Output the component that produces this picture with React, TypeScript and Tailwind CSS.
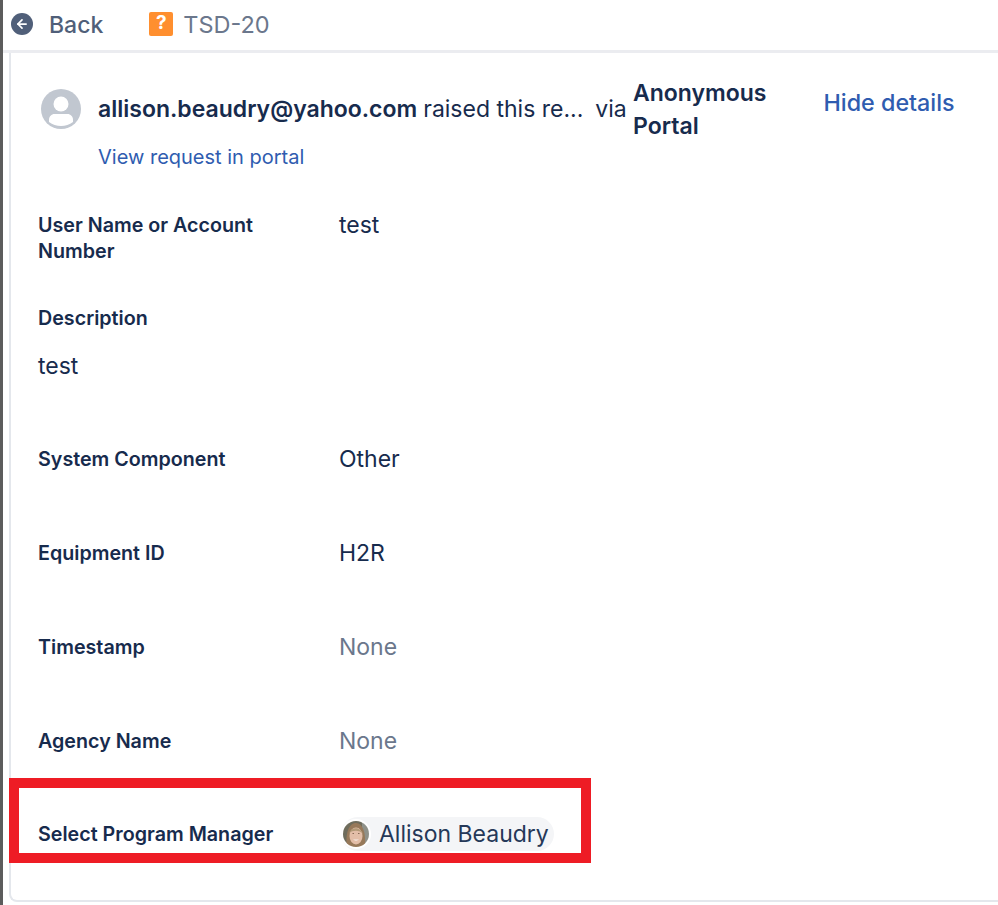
import { ArrowLeft } from "lucide-react";

const fields = [
  { label: "System Component", value: "Other", top: "mt-[64px]" },
  { label: "Equipment ID", value: "H2R", top: "mt-[64px]" },
  { label: "Timestamp", value: "None", muted: true, top: "mt-[64px]" },
  { label: "Agency Name", value: "None", muted: true, top: "mt-[64px]" },
];

const Avatar = () => (
  <svg viewBox="0 0 40 40" className="h-10 w-10 shrink-0">
    <circle cx="20" cy="20" r="20" fill="#c1c7d0" />
    <circle cx="20" cy="15" r="7.5" fill="#fff" />
    <path d="M8 30.5C8 27.5 10.5 25 13.5 25H26.5C29.5 25 32 27.5 32 30.5V33A20 20 0 0 1 8 33Z" fill="#fff" />
  </svg>
);

const Face = () => (
  <span className="block h-[26px] w-[26px] overflow-hidden rounded-full">
    <svg viewBox="0 0 26 26" className="h-[26px] w-[26px] blur-[0.6px]">
      <rect width="26" height="26" fill="#6e6c5c" />
      <rect x="19" width="7" height="26" fill="#8f9189" />
      <path d="M4 26C2 12 6 2 13 2C20 2 23 12 22 26Z" fill="#97795a" />
      <ellipse cx="13" cy="15" rx="6.5" ry="8.5" fill="#e3bea8" />
      <path d="M6 12C8 6 17 5 20 13C17 9 10 9 6 12Z" fill="#b39a78" />
      <path d="M9.5 12.5H11M15 12.5H16.5" stroke="#8a6a56" strokeWidth="1" />
      <path d="M10 18.5C11.5 20 14.5 20 16 18.5Z" fill="#f7eee8" />
    </svg>
  </span>
);

const App = () => {
  return (
    <div className="relative h-[905px] w-[998px] overflow-hidden border-l-[3px] border-[#5c5c5c] bg-white font-['Inter',sans-serif] text-[#172b4d]">
      <header className="flex h-[53px] items-center border-b-[3px] border-[#ebecf0] pb-[3px] pl-[8px]">
        <span className="flex h-[22px] w-[22px] items-center justify-center rounded-full bg-[#505f79]">
          <ArrowLeft className="h-[14px] w-[14px] text-white" strokeWidth={3} />
        </span>
        <span className="ml-[16px] mt-[3px] text-[23px] font-medium text-[#505f79]">Back</span>
        <span className="ml-[46px] flex h-6 w-6 items-center justify-center rounded-[2px] bg-[#ff8f2f] text-[19px] font-bold text-white">?</span>
        <span className="ml-[10px] mt-[3px] text-[23.5px] text-[#6b778c]">TSD-20</span>
      </header>

      <main className="ml-[6px] h-[849px] rounded-bl-lg border-b-2 border-l-2 border-[#e4e7ec] pl-[27px]">
        <div className="flex items-start pt-[24px]">
          <div className="ml-[3px] mt-[12px]">
            <Avatar />
          </div>
          <div className="ml-[17px] w-[535px]">
            <p className="mt-[18px] whitespace-nowrap text-[23px] leading-[28px]">
              <span className="font-semibold">allison.beaudry@yahoo.com</span>
              <span className="ml-[6px]">raised this re...</span>
              <span className="ml-[12px]">via</span>
            </p>
            <a className="mt-[22px] block text-[20px] leading-6 text-[#2f5cb0]">View request in portal</a>
          </div>
          <p className="text-[23px] font-semibold leading-[33px]">
            Anonymous
            <br />
            Portal
          </p>
          <a className="ml-[57px] mt-[12px] text-[23.3px] font-medium leading-7 text-[#2f5cb0]">Hide details</a>
        </div>

        <div className="mt-[43px] flex">
          <p className="w-[301px] text-[19.7px] font-semibold leading-[26px]">
            User Name or Account
            <br />
            Number
          </p>
          <p className="text-[23px] leading-[27px]">test</p>
        </div>

        <p className="mt-[41px] text-[19.7px] font-semibold leading-[27px]">Description</p>
        <p className="mt-[21px] text-[23px] leading-[27px]">test</p>

        {fields.map((f) => (
          <div key={f.label} className={`flex ${f.top} items-center`}>
            <p className="w-[301px] text-[19.7px] font-semibold leading-[30px]">{f.label}</p>
            <p className={`text-[23px] leading-[30px] ${f.muted ? "text-[#6b778c]" : ""}`}>{f.value}</p>
          </div>
        ))}

        <div className="mt-[61px] flex items-center">
          <p className="w-[303px] text-[19.7px] font-semibold leading-[30px]">Select Program Manager</p>
          <span className="flex h-[34px] items-center rounded-full bg-[#f4f5f7] pr-[5px]">
            <span className="rounded-full bg-white p-[2px]">
              <Face />
            </span>
            <span className="ml-[8px] text-[23px] text-[#253858]">Allison Beaudry</span>
          </span>
        </div>
      </main>

      <div className="absolute left-[6px] top-[778px] h-[85px] w-[582px] border-[10px] border-[#ee1c25]" />
    </div>
  );
};

export default App;
